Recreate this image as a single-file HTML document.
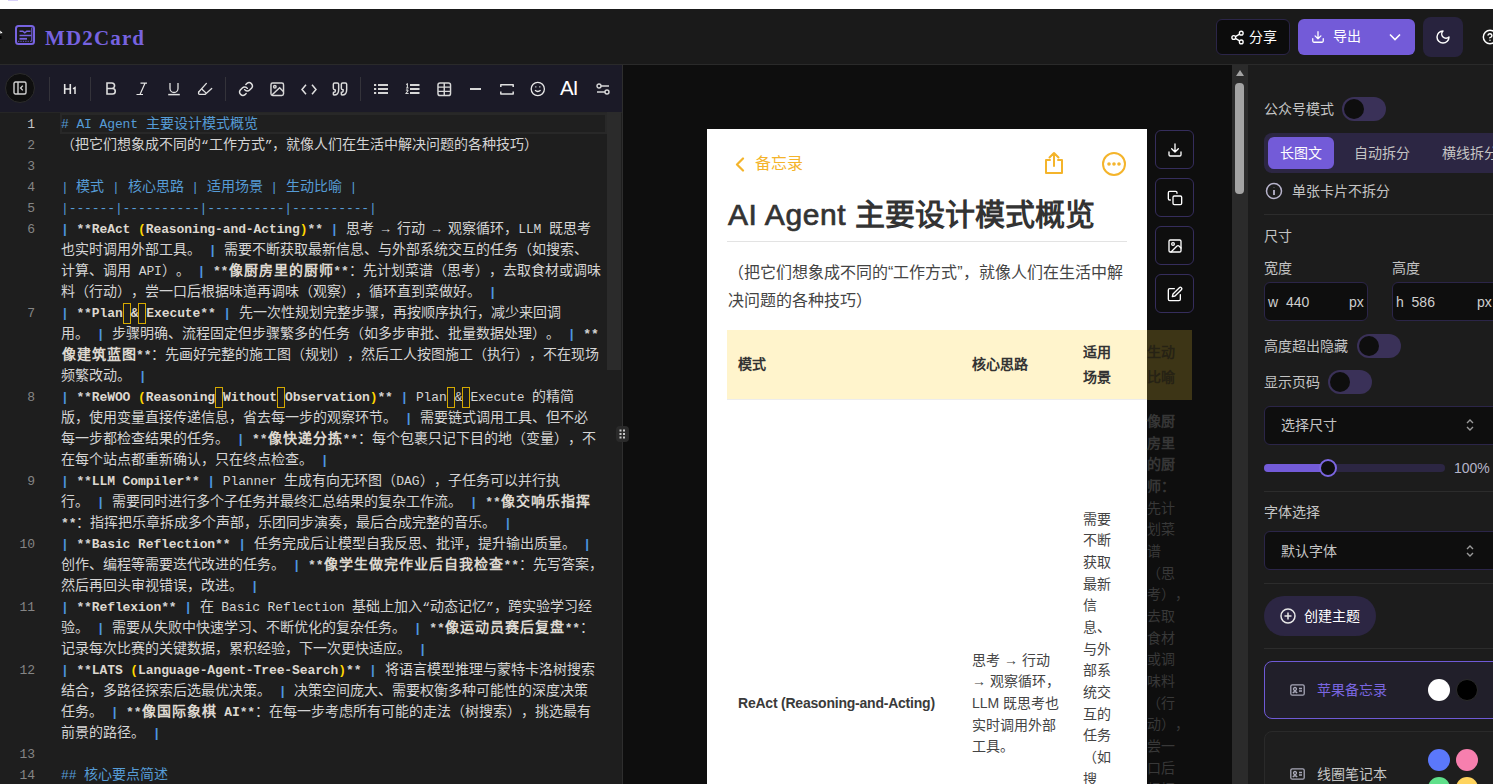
<!DOCTYPE html>
<html lang="zh-CN"><head><meta charset="utf-8">
<style>
*{box-sizing:border-box;margin:0;padding:0}
html,body{width:1493px;height:784px;overflow:hidden;background:#1a1a1a;font-family:"Liberation Sans",sans-serif}
.abs{position:absolute}
i{display:inline-block;width:1em;font-style:normal;text-align:center}
#topstrip{left:0;top:0;width:1493px;height:9px;background:#fff}
#header{left:0;top:9px;width:1493px;height:56px;background:#1a1a1a;border-bottom:1px solid #2a2a2a}
#logo-text{left:45px;top:17px;font-family:"Liberation Serif",serif;font-weight:bold;font-size:21px;color:#7763e0;line-height:24px;letter-spacing:1.15px}
.hbtn{position:absolute;border-radius:6px}
#share{left:1216px;top:10px;width:74px;height:36px;background:#0c0c0c;border:1px solid #2b2548;color:#fff;font-size:14px}
#export{left:1298px;top:10px;width:117px;height:36px;background:#735bd8;color:#fff;font-size:14px}
#moon{left:1423px;top:8px;width:40px;height:40px;background:#28233e;border-radius:8px}
/* editor */
#editor{left:0;top:65px;width:622px;height:719px;background:#1e1e1e}
#toolbar{left:0;top:0;width:622px;height:48px;background:#1b1a27;border-bottom:1px solid #262626}
.tsep{position:absolute;top:12px;width:1px;height:24px;background:#34333a}
.ti{position:absolute;top:15px;width:18px;height:18px}
#edscroll{left:607px;top:47px;width:14px;height:672px;background:#1e1e1e}
#edthumb{left:607px;top:47px;width:14px;height:258px;background:#2b2b2b}
#curline{left:60px;top:48px;width:547px;height:21px;border:2px solid #282828;background:#1f1f1f}
.ln{position:absolute;left:0;width:35px;text-align:right;font-family:"Liberation Mono",monospace;font-size:13px;line-height:21px;color:#858585}
.ln.act{color:#c6c6c6}
.el{position:absolute;left:61px;height:21px;white-space:pre;font-family:"Liberation Mono",monospace;font-size:13px;line-height:21px;color:#d4d4d4;letter-spacing:-0.1px}
.el i{width:14px;font-size:14px}
.el .o i{width:15px}
.el .b{color:#569cd6}
.el .p{font-weight:bold;color:#4d96e0}
.el .s{color:#d4d4d4;font-weight:bold}
.el .o{color:#ddd8d0;font-weight:bold}
.el .y{color:#ffd700;font-weight:bold}
.nb{display:inline-block;width:8px;height:21px;border:1px solid #d4a900;vertical-align:top;text-decoration:none}
#divider{left:622px;top:65px;width:1px;height:719px;background:#2e2e2e}
#handle{left:616px;top:426px;width:13px;height:16px;background:#2a2a2a;border-radius:4px;z-index:5}
/* preview */
#preview{left:623px;top:65px;width:609px;height:719px;background:#0e0e0e;overflow:hidden}
#card{left:84px;top:64px;width:440px;height:655px;background:#fff}
#pscroll{left:1232px;top:65px;width:16px;height:719px;background:#2b2b2b}
#pthumb{left:1235px;top:83px;width:9px;height:111px;background:#a3a3a3;border-radius:4px}
.th{font-size:14px;line-height:16px;font-weight:bold;color:#333;white-space:nowrap}
.td{font-size:14px;line-height:21.67px;color:#444;white-space:pre}
.abtn{position:absolute;left:532px;width:39px;height:39px;border:1px solid #352d5c;border-radius:6px;background:#0e0e0e}
/* settings */
#settings{left:1248px;top:65px;width:245px;height:719px;background:#1c1c1c;overflow:hidden;color:#c4c4c4;font-size:14px}
.lbl{position:absolute;left:16px;font-size:14px;line-height:16px;color:#c4c4c4;white-space:nowrap}
.tog{position:absolute;width:44px;height:24px;border-radius:12px;background:#3a3158}
.tog::after{content:"";position:absolute;left:2px;top:2px;width:20px;height:20px;border-radius:10px;background:#0e0e0e}
.inp{position:absolute;height:39px;background:#0e0e0e;border:1px solid #2b2548;border-radius:6px}
.sel{position:absolute;left:16px;width:240px;height:39px;background:#0e0e0e;border:1px solid #2b2548;border-radius:6px}
.hr{position:absolute;left:16px;width:240px;height:1px;background:#2c2c2c}
</style></head><body>
<div id="topstrip" class="abs"><div class="abs" style="left:8px;top:0;width:10px;height:1px;background:#d8d0f8"></div></div>
<div id="header" class="abs">
  <svg class="abs" style="left:15px;top:16px" width="20" height="20" viewBox="0 0 20 20" fill="none" stroke="#7763e0">
    <rect x="1" y="1" width="18" height="18" rx="2.5" stroke-width="2"/>
    <path d="M4.5 6.2h3.3l2 1.6 2-1.6h3.7" stroke-width="1.5"/>
    <path d="M4.5 10.5h12" stroke-width="1.5"/>
    <path d="M4.5 13.8h7.5" stroke-width="1.8"/>
    <path d="M3 16.3h13.5" stroke-width="0.9" stroke-dasharray="1.3 1.1"/>
    <path d="M16.8 2.5v14" stroke-width="1.1"/>
  </svg>
  <div id="logo-text" class="abs">MD2Card</div>
  <div id="share" class="hbtn">
    <svg class="abs" style="left:13px;top:10px" width="15" height="15" viewBox="0 0 24 24" fill="none" stroke="#fff" stroke-width="2.2"><circle cx="18" cy="5" r="3"/><circle cx="6" cy="12" r="3"/><circle cx="18" cy="19" r="3"/><path d="M8.6 13.5l6.8 4M15.4 6.5l-6.8 4"/></svg>
    <div class="abs" style="left:32px;top:9px;line-height:16px;white-space:nowrap"><i>分</i><i>享</i></div>
  </div>
  <div id="export" class="hbtn">
    <svg class="abs" style="left:13px;top:11px" width="14" height="14" viewBox="0 0 24 24" fill="none" stroke="#fff" stroke-width="2.2" stroke-linecap="round" stroke-linejoin="round"><path d="M3 15v4a2 2 0 0 0 2 2h14a2 2 0 0 0 2-2v-4"/><path d="M7 10l5 5 5-5M12 15V3"/></svg>
    <div class="abs" style="left:35px;top:9px;line-height:16px;white-space:nowrap"><i>导</i><i>出</i></div>
    <svg class="abs" style="left:91px;top:14px" width="12" height="8" viewBox="0 0 12 8" fill="none" stroke="#fff" stroke-width="1.6"><path d="M1 1.5l5 5 5-5"/></svg>
  </div>
  <div id="moon" class="hbtn">
    <svg class="abs" style="left:12px;top:12px" width="16" height="16" viewBox="0 0 24 24" fill="none" stroke="#fff" stroke-width="2.2" stroke-linecap="round" stroke-linejoin="round"><path d="M12 3a6 6 0 0 0 9 9 9 9 0 1 1-9-9z"/></svg>
  </div>
  <svg class="abs" style="left:1482px;top:20px" width="16" height="16" viewBox="0 0 24 24" fill="none" stroke="#fff" stroke-width="2.2" stroke-linecap="round"><circle cx="12" cy="12" r="10"/><path d="M9.1 9a3 3 0 0 1 5.8 1c0 2-3 3-3 3M12 17h.01"/></svg>
  <svg class="abs" style="left:0;top:21px" width="4" height="10" viewBox="0 0 4 10"><path d="M0 0l3 3-3 1z" fill="#fff" stroke="#000" stroke-width="0.5"/><rect x="0" y="6" width="1.5" height="3" fill="#000"/></svg>
</div>

<div id="editor" class="abs">
  <div id="toolbar" class="abs">
    <div class="abs" style="left:5px;top:8px;width:30px;height:30px;border-radius:15px;background:#0f0f0f;border:1px solid #2c2c2c"></div>
    <svg class="abs" style="left:13px;top:16px" width="14" height="14" viewBox="0 0 14 14" fill="none" stroke="#d0d0d0" stroke-width="1.4"><rect x="1" y="1" width="12" height="12" rx="1.5"/><path d="M5 1v12M9.8 4.6L7.6 7l2.2 2.4"/></svg>
    <div class="tsep" style="left:49px"></div>
    <div class="tsep" style="left:90px"></div>
    <div class="tsep" style="left:225px"></div>
    <div class="tsep" style="left:360px"></div>
    <!-- H1 -->
    <svg class="abs" style="left:63px;top:18px" width="14" height="12" viewBox="0 0 14 12" fill="none" stroke="#e6e6e6" stroke-width="1.6"><path d="M1.7 1v10M7.3 1v10M1.7 6h5.6"/><path d="M10 5.8l2-1.2V11" stroke-width="1.5"/></svg>
    <!-- B -->
    <svg class="abs" style="left:105px;top:17px" width="13" height="13" viewBox="0 0 13 13" fill="none" stroke="#dcdcdc" stroke-width="1.6"><path d="M2 1h4.8a2.75 2.75 0 0 1 0 5.5H2zM2 6.5h5.5a2.75 2.75 0 0 1 0 5.5H2z"/></svg>
    <!-- I -->
    <svg class="abs" style="left:135px;top:82px;top:17px" width="14" height="14" viewBox="0 0 14 14" fill="none" stroke="#e6e6e6" stroke-width="1.2"><path d="M5.5 1.2h6.5M1.5 12.5h6.5M10 1.2L5 12.5"/></svg>
    <!-- U -->
    <svg class="abs" style="left:167px;top:17px" width="14" height="14" viewBox="0 0 14 14" fill="none" stroke="#e0e0e0" stroke-width="1.3"><path d="M3 1v5.5a4 4 0 0 0 8 0V1"/><path d="M1.2 12.6h11.6" stroke-width="1.5"/></svg>
    <!-- eraser -->
    <svg class="abs" style="left:197px;top:17px" width="16" height="14" viewBox="0 0 16 14" fill="none" stroke="#e0e0e0" stroke-width="1.3" stroke-linecap="round" stroke-linejoin="round"><path d="M1.7 10L9.4 1.4"/><path d="M1.7 10Q1 12.4 2.8 12.4H8L14.7 6.4"/><path d="M5 7.2L8.6 10.6"/></svg>
    <!-- link -->
    <svg class="abs" style="left:237.5px;top:15.5px" width="16" height="16" viewBox="0 0 24 24" fill="none" stroke="#e0e0e0" stroke-width="2.2" stroke-linecap="round"><path d="M10 13a5 5 0 0 0 7.5.5l3-3a5 5 0 0 0-7-7l-1.7 1.7"/><path d="M14 11a5 5 0 0 0-7.5-.5l-3 3a5 5 0 0 0 7 7l1.7-1.7"/></svg>
    <!-- image -->
    <svg class="abs" style="left:270px;top:17px" width="14.5" height="14.5" viewBox="0 0 15 15" fill="none" stroke="#d8d8d8" stroke-width="1.5"><rect x="1" y="1" width="13" height="13" rx="1.8"/><circle cx="5" cy="5" r="1.3"/><path d="M2 13.5l8-7.5 4 4"/></svg>
    <!-- code -->
    <svg class="abs" style="left:301px;top:18.5px" width="16" height="11" viewBox="0 0 16 11" fill="none" stroke="#e0e0e0" stroke-width="1.5"><path d="M5 .8L1 5.5l4 4.7M11 .8l4 4.7-4 4.7"/></svg>
    <!-- quote -->
    <svg class="abs" style="left:332px;top:16px" width="16" height="16" viewBox="0 0 24 24" fill="none" stroke="#dcdcdc" stroke-width="2.2" stroke-linecap="round" stroke-linejoin="round"><path d="M3 21c3 0 7-1 7-8V5c0-1.25-.76-2-2-2H4c-1.25 0-2 .75-2 2v6c0 1.25.75 2 2 2 1 0 1 0 1 1v1c0 1-1 2-2 2s-1 0-1 1v2c0 1 0 1 1 1z"/><path d="M15 21c3 0 7-1 7-8V5c0-1.25-.76-2-2-2h-4c-1.25 0-2 .75-2 2v6c0 1.25.75 2 2 2h.75c0 2.25.25 4-2.75 4v3c0 1 0 1 1 1z"/></svg>
    <!-- ul -->
    <svg class="abs" style="left:374px;top:18px" width="15" height="12" viewBox="0 0 15 12" fill="none" stroke="#d4d4d4" stroke-width="2"><path d="M0 2h2.2M0 6h2.2M0 10h2.2"/><path d="M4 2h10M4 6h10M4 10h10" stroke-width="1.9"/></svg>
    <!-- ol -->
    <svg class="abs" style="left:405px;top:18px" width="15" height="12" viewBox="0 0 15 12" fill="none" stroke="#d8d8d8"><path d="M1.2 1.6l1.2-.6v4.2M1 5h2.6" stroke-width="1.1"/><path d="M1 7.4q.8-.8 1.6-.4.8.6-.2 1.5L1 10.5h2.6" stroke-width="1.1"/><path d="M5 2h9.5M5 6h9.5M5 10h9.5" stroke-width="1.9"/></svg>
    <!-- table -->
    <svg class="abs" style="left:437px;top:17px" width="14.5" height="14.5" viewBox="0 0 15 15" fill="none" stroke="#d8d8d8" stroke-width="1.5"><rect x="1" y="1" width="13" height="13" rx="2.2"/><path d="M1 5.3h13M1 9.7h13M7.5 1v13"/></svg>
    <!-- hr -->
    <svg class="abs" style="left:469.5px;top:23px" width="12" height="3" viewBox="0 0 12 3"><rect x="0" y="0" width="11" height="2" fill="#d8d8d8"/></svg>
    <!-- page break -->
    <svg class="abs" style="left:500px;top:19px" width="14" height="11" viewBox="0 0 14 11" fill="none" stroke="#e0e0e0" stroke-width="1.5" stroke-linejoin="round"><path d="M.8 3V.8h12.4V3M.8 7.6v2.4h12.4V7.6"/></svg>
    <!-- emoji -->
    <svg class="abs" style="left:530px;top:16px" width="16" height="16" viewBox="0 0 16 16" fill="none" stroke="#e8e8e8" stroke-width="1.3"><circle cx="7.8" cy="8" r="6.6"/><path d="M5 9.3q2.8 2.4 5.6 0"/><path d="M5.2 5.2h1.2v1.2H5.2zM9.2 5.2h1.2v1.2H9.2z" fill="#d0d0d0" stroke="none"/></svg>
    <!-- AI -->
    <div class="abs" style="left:560px;top:12px;font-size:20.5px;line-height:22px;color:#fff;letter-spacing:-0.8px">AI</div>
    <!-- settings -->
    <svg class="abs" style="left:596px;top:18px" width="14" height="12" viewBox="0 0 14 12" fill="none" stroke="#d8d8d8" stroke-width="1.4"><circle cx="3" cy="3" r="2"/><circle cx="11" cy="9" r="2"/><path d="M5 3h8M1 9h8"/></svg>
  </div>
  <div id="edscroll" class="abs"></div>
  <div id="edthumb" class="abs"></div>
  <div id="curline" class="abs"></div>
  <div class="abs" style="left:0;top:-64px">
<div class="ln act" style="top:113px">1</div>
<div class="el" style="top:113px"><span class="b"># AI Agent <i>主</i><i>要</i><i>设</i><i>计</i><i>模</i><i>式</i><i>概</i><i>览</i></span></div>
<div class="ln" style="top:134px">2</div>
<div class="el" style="top:134px"><span class="d"><i>（</i><i>把</i><i>它</i><i>们</i><i>想</i><i>象</i><i>成</i><i>不</i><i>同</i><i>的</i>“<i>工</i><i>作</i><i>方</i><i>式</i>”<i>，</i><i>就</i><i>像</i><i>人</i><i>们</i><i>在</i><i>生</i><i>活</i><i>中</i><i>解</i><i>决</i><i>问</i><i>题</i><i>的</i><i>各</i><i>种</i><i>技</i><i>巧</i><i>）</i></span></div>
<div class="ln" style="top:155px">3</div>
<div class="el" style="top:155px"></div>
<div class="ln" style="top:176px">4</div>
<div class="el" style="top:176px"><span class="b">| <i>模</i><i>式</i> | <i>核</i><i>心</i><i>思</i><i>路</i> | <i>适</i><i>用</i><i>场</i><i>景</i> | <i>生</i><i>动</i><i>比</i><i>喻</i> |</span></div>
<div class="ln" style="top:197px">5</div>
<div class="el" style="top:197px"><span class="b">|------|----------|----------|----------|</span></div>
<div class="ln" style="top:218px">6</div>
<div class="el" style="top:218px"><span class="b p">| </span><span class="s">**</span><span class="o">ReAct </span><span class="y">(</span><span class="o">Reasoning-and-Acting</span><span class="y">)</span><span class="s">**</span><span class="d"> </span><span class="b p">|</span><span class="d"> <i>思</i><i>考</i> → <i>行</i><i>动</i> → <i>观</i><i>察</i><i>循</i><i>环</i><i>，</i>LLM <i>既</i><i>思</i><i>考</i></span></div>
<div class="el" style="top:239px"><span class="d"><i>也</i><i>实</i><i>时</i><i>调</i><i>用</i><i>外</i><i>部</i><i>工</i><i>具</i><i>。</i> </span><span class="b p">|</span><span class="d"> <i>需</i><i>要</i><i>不</i><i>断</i><i>获</i><i>取</i><i>最</i><i>新</i><i>信</i><i>息</i><i>、</i><i>与</i><i>外</i><i>部</i><i>系</i><i>统</i><i>交</i><i>互</i><i>的</i><i>任</i><i>务</i><i>（</i><i>如</i><i>搜</i><i>索</i><i>、</i></span></div>
<div class="el" style="top:260px"><span class="d"><i>计</i><i>算</i><i>、</i><i>调</i><i>用</i> API<i>）</i><i>。</i> </span><span class="b p">|</span><span class="d"> </span><span class="s">**</span><span class="o"><i>像</i><i>厨</i><i>房</i><i>里</i><i>的</i><i>厨</i><i>师</i></span><span class="s">**</span><span class="d"><i>：</i><i>先</i><i>计</i><i>划</i><i>菜</i><i>谱</i><i>（</i><i>思</i><i>考</i><i>）</i><i>，</i><i>去</i><i>取</i><i>食</i><i>材</i><i>或</i><i>调</i><i>味</i></span></div>
<div class="el" style="top:281px"><span class="d"><i>料</i><i>（</i><i>行</i><i>动</i><i>）</i><i>，</i><i>尝</i><i>一</i><i>口</i><i>后</i><i>根</i><i>据</i><i>味</i><i>道</i><i>再</i><i>调</i><i>味</i><i>（</i><i>观</i><i>察</i><i>）</i><i>，</i><i>循</i><i>环</i><i>直</i><i>到</i><i>菜</i><i>做</i><i>好</i><i>。</i> </span><span class="b p">|</span></div>
<div class="ln" style="top:302px">7</div>
<div class="el" style="top:302px"><span class="b p">| </span><span class="s">**</span><span class="o">Plan</span><u class="nb"></u><span class="o">&amp;</span><u class="nb"></u><span class="o">Execute</span><span class="s">**</span><span class="d"> </span><span class="b p">|</span><span class="d"> <i>先</i><i>一</i><i>次</i><i>性</i><i>规</i><i>划</i><i>完</i><i>整</i><i>步</i><i>骤</i><i>，</i><i>再</i><i>按</i><i>顺</i><i>序</i><i>执</i><i>行</i><i>，</i><i>减</i><i>少</i><i>来</i><i>回</i><i>调</i></span></div>
<div class="el" style="top:323px"><span class="d"><i>用</i><i>。</i> </span><span class="b p">|</span><span class="d"> <i>步</i><i>骤</i><i>明</i><i>确</i><i>、</i><i>流</i><i>程</i><i>固</i><i>定</i><i>但</i><i>步</i><i>骤</i><i>繁</i><i>多</i><i>的</i><i>任</i><i>务</i><i>（</i><i>如</i><i>多</i><i>步</i><i>审</i><i>批</i><i>、</i><i>批</i><i>量</i><i>数</i><i>据</i><i>处</i><i>理</i><i>）</i><i>。</i> </span><span class="b p">|</span><span class="d"> </span><span class="s">**</span></div>
<div class="el" style="top:344px"><span class="o"><i>像</i><i>建</i><i>筑</i><i>蓝</i><i>图</i></span><span class="s">**</span><span class="d"><i>：</i><i>先</i><i>画</i><i>好</i><i>完</i><i>整</i><i>的</i><i>施</i><i>工</i><i>图</i><i>（</i><i>规</i><i>划</i><i>）</i><i>，</i><i>然</i><i>后</i><i>工</i><i>人</i><i>按</i><i>图</i><i>施</i><i>工</i><i>（</i><i>执</i><i>行</i><i>）</i><i>，</i><i>不</i><i>在</i><i>现</i><i>场</i></span></div>
<div class="el" style="top:365px"><span class="d"><i>频</i><i>繁</i><i>改</i><i>动</i><i>。</i> </span><span class="b p">|</span></div>
<div class="ln" style="top:386px">8</div>
<div class="el" style="top:386px"><span class="b p">| </span><span class="s">**</span><span class="o">ReWOO </span><span class="y">(</span><span class="o">Reasoning</span><u class="nb"></u><span class="o">Without</span><u class="nb"></u><span class="o">Observation</span><span class="y">)</span><span class="s">**</span><span class="d"> </span><span class="b p">|</span><span class="d"> Plan</span><u class="nb"></u><span class="d">&amp;</span><u class="nb"></u><span class="d">Execute <i>的</i><i>精</i><i>简</i></span></div>
<div class="el" style="top:407px"><span class="d"><i>版</i><i>，</i><i>使</i><i>用</i><i>变</i><i>量</i><i>直</i><i>接</i><i>传</i><i>递</i><i>信</i><i>息</i><i>，</i><i>省</i><i>去</i><i>每</i><i>一</i><i>步</i><i>的</i><i>观</i><i>察</i><i>环</i><i>节</i><i>。</i> </span><span class="b p">|</span><span class="d"> <i>需</i><i>要</i><i>链</i><i>式</i><i>调</i><i>用</i><i>工</i><i>具</i><i>、</i><i>但</i><i>不</i><i>必</i></span></div>
<div class="el" style="top:428px"><span class="d"><i>每</i><i>一</i><i>步</i><i>都</i><i>检</i><i>查</i><i>结</i><i>果</i><i>的</i><i>任</i><i>务</i><i>。</i> </span><span class="b p">|</span><span class="d"> </span><span class="s">**</span><span class="o"><i>像</i><i>快</i><i>递</i><i>分</i><i>拣</i></span><span class="s">**</span><span class="d"><i>：</i><i>每</i><i>个</i><i>包</i><i>裹</i><i>只</i><i>记</i><i>下</i><i>目</i><i>的</i><i>地</i><i>（</i><i>变</i><i>量</i><i>）</i><i>，</i><i>不</i></span></div>
<div class="el" style="top:449px"><span class="d"><i>在</i><i>每</i><i>个</i><i>站</i><i>点</i><i>都</i><i>重</i><i>新</i><i>确</i><i>认</i><i>，</i><i>只</i><i>在</i><i>终</i><i>点</i><i>检</i><i>查</i><i>。</i> </span><span class="b p">|</span></div>
<div class="ln" style="top:470px">9</div>
<div class="el" style="top:470px"><span class="b p">| </span><span class="s">**</span><span class="o">LLM Compiler</span><span class="s">**</span><span class="d"> </span><span class="b p">|</span><span class="d"> Planner <i>生</i><i>成</i><i>有</i><i>向</i><i>无</i><i>环</i><i>图</i><i>（</i>DAG<i>）</i><i>，</i><i>子</i><i>任</i><i>务</i><i>可</i><i>以</i><i>并</i><i>行</i><i>执</i></span></div>
<div class="el" style="top:491px"><span class="d"><i>行</i><i>。</i> </span><span class="b p">|</span><span class="d"> <i>需</i><i>要</i><i>同</i><i>时</i><i>进</i><i>行</i><i>多</i><i>个</i><i>子</i><i>任</i><i>务</i><i>并</i><i>最</i><i>终</i><i>汇</i><i>总</i><i>结</i><i>果</i><i>的</i><i>复</i><i>杂</i><i>工</i><i>作</i><i>流</i><i>。</i> </span><span class="b p">|</span><span class="d"> </span><span class="s">**</span><span class="o"><i>像</i><i>交</i><i>响</i><i>乐</i><i>指</i><i>挥</i></span></div>
<div class="el" style="top:512px"><span class="s">**</span><span class="d"><i>：</i><i>指</i><i>挥</i><i>把</i><i>乐</i><i>章</i><i>拆</i><i>成</i><i>多</i><i>个</i><i>声</i><i>部</i><i>，</i><i>乐</i><i>团</i><i>同</i><i>步</i><i>演</i><i>奏</i><i>，</i><i>最</i><i>后</i><i>合</i><i>成</i><i>完</i><i>整</i><i>的</i><i>音</i><i>乐</i><i>。</i> </span><span class="b p">|</span></div>
<div class="ln" style="top:533px">10</div>
<div class="el" style="top:533px"><span class="b p">| </span><span class="s">**</span><span class="o">Basic Reflection</span><span class="s">**</span><span class="d"> </span><span class="b p">|</span><span class="d"> <i>任</i><i>务</i><i>完</i><i>成</i><i>后</i><i>让</i><i>模</i><i>型</i><i>自</i><i>我</i><i>反</i><i>思</i><i>、</i><i>批</i><i>评</i><i>，</i><i>提</i><i>升</i><i>输</i><i>出</i><i>质</i><i>量</i><i>。</i> </span><span class="b p">|</span></div>
<div class="el" style="top:554px"><span class="d"><i>创</i><i>作</i><i>、</i><i>编</i><i>程</i><i>等</i><i>需</i><i>要</i><i>迭</i><i>代</i><i>改</i><i>进</i><i>的</i><i>任</i><i>务</i><i>。</i> </span><span class="b p">|</span><span class="d"> </span><span class="s">**</span><span class="o"><i>像</i><i>学</i><i>生</i><i>做</i><i>完</i><i>作</i><i>业</i><i>后</i><i>自</i><i>我</i><i>检</i><i>查</i></span><span class="s">**</span><span class="d"><i>：</i><i>先</i><i>写</i><i>答</i><i>案</i><i>，</i></span></div>
<div class="el" style="top:575px"><span class="d"><i>然</i><i>后</i><i>再</i><i>回</i><i>头</i><i>审</i><i>视</i><i>错</i><i>误</i><i>，</i><i>改</i><i>进</i><i>。</i> </span><span class="b p">|</span></div>
<div class="ln" style="top:596px">11</div>
<div class="el" style="top:596px"><span class="b p">| </span><span class="s">**</span><span class="o">Reflexion</span><span class="s">**</span><span class="d"> </span><span class="b p">|</span><span class="d"> <i>在</i> Basic Reflection <i>基</i><i>础</i><i>上</i><i>加</i><i>入</i>“<i>动</i><i>态</i><i>记</i><i>忆</i>”<i>，</i><i>跨</i><i>实</i><i>验</i><i>学</i><i>习</i><i>经</i></span></div>
<div class="el" style="top:617px"><span class="d"><i>验</i><i>。</i> </span><span class="b p">|</span><span class="d"> <i>需</i><i>要</i><i>从</i><i>失</i><i>败</i><i>中</i><i>快</i><i>速</i><i>学</i><i>习</i><i>、</i><i>不</i><i>断</i><i>优</i><i>化</i><i>的</i><i>复</i><i>杂</i><i>任</i><i>务</i><i>。</i> </span><span class="b p">|</span><span class="d"> </span><span class="s">**</span><span class="o"><i>像</i><i>运</i><i>动</i><i>员</i><i>赛</i><i>后</i><i>复</i><i>盘</i></span><span class="s">**</span><span class="d"><i>：</i></span></div>
<div class="el" style="top:638px"><span class="d"><i>记</i><i>录</i><i>每</i><i>次</i><i>比</i><i>赛</i><i>的</i><i>关</i><i>键</i><i>数</i><i>据</i><i>，</i><i>累</i><i>积</i><i>经</i><i>验</i><i>，</i><i>下</i><i>一</i><i>次</i><i>更</i><i>快</i><i>适</i><i>应</i><i>。</i> </span><span class="b p">|</span></div>
<div class="ln" style="top:659px">12</div>
<div class="el" style="top:659px"><span class="b p">| </span><span class="s">**</span><span class="o">LATS </span><span class="y">(</span><span class="o">Language-Agent-Tree-Search</span><span class="y">)</span><span class="s">**</span><span class="d"> </span><span class="b p">|</span><span class="d"> <i>将</i><i>语</i><i>言</i><i>模</i><i>型</i><i>推</i><i>理</i><i>与</i><i>蒙</i><i>特</i><i>卡</i><i>洛</i><i>树</i><i>搜</i><i>索</i></span></div>
<div class="el" style="top:680px"><span class="d"><i>结</i><i>合</i><i>，</i><i>多</i><i>路</i><i>径</i><i>探</i><i>索</i><i>后</i><i>选</i><i>最</i><i>优</i><i>决</i><i>策</i><i>。</i> </span><span class="b p">|</span><span class="d"> <i>决</i><i>策</i><i>空</i><i>间</i><i>庞</i><i>大</i><i>、</i><i>需</i><i>要</i><i>权</i><i>衡</i><i>多</i><i>种</i><i>可</i><i>能</i><i>性</i><i>的</i><i>深</i><i>度</i><i>决</i><i>策</i></span></div>
<div class="el" style="top:701px"><span class="d"><i>任</i><i>务</i><i>。</i> </span><span class="b p">|</span><span class="d"> </span><span class="s">**</span><span class="o"><i>像</i><i>国</i><i>际</i><i>象</i><i>棋</i> AI</span><span class="s">**</span><span class="d"><i>：</i><i>在</i><i>每</i><i>一</i><i>步</i><i>考</i><i>虑</i><i>所</i><i>有</i><i>可</i><i>能</i><i>的</i><i>走</i><i>法</i><i>（</i><i>树</i><i>搜</i><i>索</i><i>）</i><i>，</i><i>挑</i><i>选</i><i>最</i><i>有</i></span></div>
<div class="el" style="top:722px"><span class="d"><i>前</i><i>景</i><i>的</i><i>路</i><i>径</i><i>。</i> </span><span class="b p">|</span></div>
<div class="ln" style="top:743px">13</div>
<div class="el" style="top:743px"></div>
<div class="ln" style="top:764px">14</div>
<div class="el" style="top:764px"><span class="b">## <i>核</i><i>心</i><i>要</i><i>点</i><i>简</i><i>述</i></span></div>
  </div>
</div>
<div id="divider" class="abs"></div>
<div id="handle" class="abs"><svg class="abs" style="left:3px;top:3px" width="7" height="10" viewBox="0 0 7 10" fill="#c8c8c8"><rect x="0.5" y="0.5" width="2" height="2"/><rect x="4" y="0.5" width="2" height="2"/><rect x="0.5" y="4" width="2" height="2"/><rect x="4" y="4" width="2" height="2"/><rect x="0.5" y="7.5" width="2" height="2"/><rect x="4" y="7.5" width="2" height="2"/></svg></div>


<div id="preview" class="abs">
  <div id="card" class="abs"></div>
  <!-- overflow dim region (page x 1147-1232) -->
  <div class="abs" style="left:524px;top:265px;width:45px;height:70px;background:#3d3516"></div>
  <div class="abs" style="left:524px;top:275px;width:40px;font-size:14px;line-height:25px;font-weight:bold;color:#262214"><i>生</i><i>动</i><br><i>比</i><i>喻</i></div>
  <div class="abs cdim" style="left:524px;top:346px;width:40px;font-size:14px;line-height:21.67px;color:#383838;white-space:pre"><b style="color:#363636"><i>像</i><i>厨</i>
<i>房</i><i>里</i>
<i>的</i><i>厨</i>
<i>师</i><i>：</i></b>
<i>先</i><i>计</i>
<i>划</i><i>菜</i>
<i>谱</i>
<i>（</i><i>思</i>
<i>考</i><i>）</i><i>，</i>
<i>去</i><i>取</i>
<i>食</i><i>材</i>
<i>或</i><i>调</i>
<i>味</i><i>料</i>
<i>（</i><i>行</i>
<i>动</i><i>）</i><i>，</i>
<i>尝</i><i>一</i>
<i>口</i><i>后</i>
<i>根</i><i>据</i></div>
  <div class="abs" style="left:84px;top:64px;width:440px;height:655px;overflow:hidden">
    <svg class="abs" style="left:28px;top:28px" width="10" height="15" viewBox="0 0 10 15" fill="none" stroke="#f4b42b" stroke-width="2.2" stroke-linecap="round" stroke-linejoin="round"><path d="M8 1.5L2 7.5l6 6"/></svg>
    <div class="abs" style="left:48px;top:26px;font-size:16px;line-height:18px;color:#f4b42b;white-space:nowrap"><i>备</i><i>忘</i><i>录</i></div>
    <svg class="abs" style="left:336px;top:22px" width="22" height="24" viewBox="0 0 22 24" fill="none" stroke="#f4b42b" stroke-width="2" stroke-linecap="round" stroke-linejoin="round"><path d="M7 9H3v13h16V9h-4M11 15V2M6.5 6.5L11 2l4.5 4.5"/></svg>
    <svg class="abs" style="left:395px;top:23px" width="24" height="24" viewBox="0 0 24 24" fill="none" stroke="#f4b42b" stroke-width="2"><circle cx="12" cy="12" r="11"/><circle cx="7" cy="12" r=".8" fill="#f4b42b"/><circle cx="12" cy="12" r=".8" fill="#f4b42b"/><circle cx="17" cy="12" r=".8" fill="#f4b42b"/></svg>
    <div class="abs" style="left:21px;top:69px;font-size:30px;line-height:34px;font-weight:bold;color:#333;white-space:nowrap"><span style="font-weight:normal;-webkit-text-stroke:0.7px #333;letter-spacing:0.6px">AI Agent </span><span style="letter-spacing:-0.4px"><i>主</i><i>要</i><i>设</i><i>计</i><i>模</i><i>式</i><i>概</i><i>览</i></span></div>
    <div class="abs" style="left:20px;top:112px;width:400px;height:1px;background:#e3e3e3"></div>
    <div class="abs" style="left:21px;top:130px;width:410px;font-size:16px;line-height:28px;color:#444;white-space:pre"><i>（</i><i>把</i><i>它</i><i>们</i><i>想</i><i>象</i><i>成</i><i>不</i><i>同</i><i>的</i>“<i>工</i><i>作</i><i>方</i><i>式</i>”<i>，</i><i>就</i><i>像</i><i>人</i><i>们</i><i>在</i><i>生</i><i>活</i><i>中</i><i>解</i>
<i>决</i><i>问</i><i>题</i><i>的</i><i>各</i><i>种</i><i>技</i><i>巧</i><i>）</i></div>
    <div class="abs" style="left:20px;top:201px;width:440px;height:70px;background:#fff4cc;border-bottom:1px solid #ececec"></div>
    <div class="abs th" style="left:31px;top:227px"><i>模</i><i>式</i></div>
    <div class="abs th" style="left:265px;top:227px"><i>核</i><i>心</i><i>思</i><i>路</i></div>
    <div class="abs th" style="left:376px;top:211px;line-height:25px"><i>适</i><i>用</i><br><i>场</i><i>景</i></div>
    <div class="abs" style="left:31px;top:566px;font-size:14px;line-height:16px;font-weight:bold;color:#3a3a3a;white-space:nowrap;letter-spacing:-0.22px">ReAct (Reasoning-and-Acting)</div>
    <div class="abs td" style="left:265px;top:520.5px"><i>思</i><i>考</i> → <i>行</i><i>动</i>
→ <i>观</i><i>察</i><i>循</i><i>环</i><i>，</i>
LLM <i>既</i><i>思</i><i>考</i><i>也</i>
<i>实</i><i>时</i><i>调</i><i>用</i><i>外</i><i>部</i>
<i>工</i><i>具</i><i>。</i></div>
    <div class="abs td" style="left:376px;top:379.5px"><i>需</i><i>要</i>
<i>不</i><i>断</i>
<i>获</i><i>取</i>
<i>最</i><i>新</i>
<i>信</i>
<i>息</i><i>、</i>
<i>与</i><i>外</i>
<i>部</i><i>系</i>
<i>统</i><i>交</i>
<i>互</i><i>的</i>
<i>任</i><i>务</i>
<i>（</i><i>如</i>
<i>搜</i>
<i>索</i><i>、</i></div>
  </div>
  <div class="abtn" style="top:65px"><svg class="abs" style="left:11px;top:11px" width="16" height="16" viewBox="0 0 24 24" fill="none" stroke="#fff" stroke-width="2" stroke-linecap="round" stroke-linejoin="round"><path d="M3 15v4a2 2 0 0 0 2 2h14a2 2 0 0 0 2-2v-4"/><path d="M7 10l5 5 5-5M12 15V3"/></svg></div>
  <div class="abtn" style="top:113px"><svg class="abs" style="left:11px;top:11px" width="16" height="16" viewBox="0 0 24 24" fill="none" stroke="#fff" stroke-width="2" stroke-linecap="round" stroke-linejoin="round"><rect x="9" y="9" width="13" height="13" rx="2"/><path d="M5 15H4a2 2 0 0 1-2-2V4a2 2 0 0 1 2-2h9a2 2 0 0 1 2 2v1"/></svg></div>
  <div class="abtn" style="top:161px"><svg class="abs" style="left:11px;top:11px" width="16" height="16" viewBox="0 0 24 24" fill="none" stroke="#fff" stroke-width="2" stroke-linecap="round" stroke-linejoin="round"><rect x="3" y="3" width="18" height="18" rx="2"/><circle cx="9" cy="9" r="2"/><path d="M21 15l-3-3a2 2 0 0 0-3 0L6 21"/></svg></div>
  <div class="abtn" style="top:209px"><svg class="abs" style="left:11px;top:11px" width="16" height="16" viewBox="0 0 24 24" fill="none" stroke="#fff" stroke-width="2" stroke-linecap="round" stroke-linejoin="round"><path d="M11 4H4a2 2 0 0 0-2 2v14a2 2 0 0 0 2 2h14a2 2 0 0 0 2-2v-7"/><path d="M18.5 2.5a2.1 2.1 0 0 1 3 3L12 15l-4 1 1-4z"/></svg></div>
</div>
<div id="pscroll" class="abs">
  <svg class="abs" style="left:4px;top:5px" width="8" height="6" viewBox="0 0 8 6"><path d="M0 6L4 0l4 6z" fill="#a3a3a3"/></svg>
</div>
<div id="pthumb" class="abs"></div>


<div id="settings" class="abs">
  <div class="lbl" style="top:36px"><i>公</i><i>众</i><i>号</i><i>模</i><i>式</i></div>
  <div class="tog" style="left:94px;top:32px"></div>
  <div class="abs" style="left:16px;top:68px;width:260px;height:40px;background:#2c2643;border-radius:8px"></div>
  <div class="abs" style="left:20px;top:72px;width:66px;height:32px;background:#735bd8;border-radius:6px"></div>
  <div class="lbl" style="left:32px;top:80px;color:#fff"><i>长</i><i>图</i><i>文</i></div>
  <div class="lbl" style="left:106px;top:80px"><i>自</i><i>动</i><i>拆</i><i>分</i></div>
  <div class="lbl" style="left:194px;top:80px"><i>横</i><i>线</i><i>拆</i><i>分</i></div>
  <svg class="abs" style="left:17px;top:117px" width="18" height="18" viewBox="0 0 18 18" fill="none" stroke="#b8b4cc" stroke-width="1.5"><circle cx="9" cy="9" r="7.5"/><path d="M9 8v5M9 5.2v.3" stroke-width="1.8"/></svg>
  <div class="lbl" style="left:44px;top:118px"><i>单</i><i>张</i><i>卡</i><i>片</i><i>不</i><i>拆</i><i>分</i></div>
  <div class="hr" style="top:149px"></div>
  <div class="lbl" style="top:163px"><i>尺</i><i>寸</i></div>
  <div class="lbl" style="top:195px"><i>宽</i><i>度</i></div>
  <div class="lbl" style="left:144px;top:195px"><i>高</i><i>度</i></div>
  <div class="inp" style="left:16px;top:217px;width:104px"></div>
  <div class="lbl" style="left:20px;top:229px;color:#cfcfcf">w&nbsp;&nbsp;440</div>
  <div class="lbl" style="left:101px;top:229px;color:#cfcfcf">px</div>
  <div class="inp" style="left:144px;top:217px;width:120px"></div>
  <div class="lbl" style="left:148px;top:229px;color:#cfcfcf">h&nbsp;&nbsp;586</div>
  <div class="lbl" style="left:229px;top:229px;color:#cfcfcf">px</div>
  <div class="lbl" style="top:273px"><i>高</i><i>度</i><i>超</i><i>出</i><i>隐</i><i>藏</i></div>
  <div class="tog" style="left:109px;top:269px"></div>
  <div class="lbl" style="top:309px"><i>显</i><i>示</i><i>页</i><i>码</i></div>
  <div class="tog" style="left:80px;top:305px"></div>
  <div class="sel" style="top:341px"></div>
  <div class="lbl" style="left:33px;top:352px"><i>选</i><i>择</i><i>尺</i><i>寸</i></div>
  <svg class="abs" style="left:217px;top:353px" width="10" height="14" viewBox="0 0 10 14" fill="none" stroke="#9a9a9a" stroke-width="1.4"><path d="M2 5l3-3 3 3M2 9l3 3 3-3"/></svg>
  <div class="abs" style="left:16px;top:399px;width:181px;height:8px;border-radius:4px;background:#2c2643"></div>
  <div class="abs" style="left:16px;top:399px;width:66px;height:8px;border-radius:4px;background:#735bd8"></div>
  <div class="abs" style="left:71px;top:394px;width:18px;height:18px;border-radius:9px;background:#0e0e0e;border:2px solid #7b66e0"></div>
  <div class="lbl" style="left:206px;top:395px;color:#b4b4c8">100%</div>
  <div class="hr" style="top:426px"></div>
  <div class="lbl" style="top:439px"><i>字</i><i>体</i><i>选</i><i>择</i></div>
  <div class="sel" style="top:466px"></div>
  <div class="lbl" style="left:33px;top:478px"><i>默</i><i>认</i><i>字</i><i>体</i></div>
  <svg class="abs" style="left:217px;top:479px" width="10" height="14" viewBox="0 0 10 14" fill="none" stroke="#9a9a9a" stroke-width="1.4"><path d="M2 5l3-3 3 3M2 9l3 3 3-3"/></svg>
  <div class="hr" style="top:518px"></div>
  <div class="abs" style="left:16px;top:531px;width:112px;height:40px;border-radius:20px;background:#2c2643"></div>
  <svg class="abs" style="left:32px;top:543px" width="16" height="16" viewBox="0 0 16 16" fill="none" stroke="#e8e8e8" stroke-width="1.5"><circle cx="8" cy="8" r="7"/><path d="M8 4.5v7M4.5 8h7"/></svg>
  <div class="lbl" style="left:56px;top:543px;color:#fff"><i>创</i><i>建</i><i>主</i><i>题</i></div>
  <div class="hr" style="top:583px"></div>
  <div class="abs" style="left:16px;top:596px;width:260px;height:58px;border-radius:8px;background:#211f2a;border:1.5px solid #6f5ad6"></div>
  <svg class="abs" style="left:42px;top:619px" width="15" height="12" viewBox="0 0 15 12" fill="none" stroke="#a8a8b8" stroke-width="1.3"><rect x=".8" y=".8" width="13.4" height="10.4" rx="1.5"/><circle cx="5" cy="5" r="1.5"/><path d="M2.8 9q2.2-2.5 4.4 0M9 4.5h3M9 7h3"/></svg>
  <div class="lbl" style="left:69px;top:617px;color:#7a66e0"><i>苹</i><i>果</i><i>备</i><i>忘</i><i>录</i></div>
  <div class="abs" style="left:180px;top:614px;width:22px;height:22px;border-radius:11px;background:#fff"></div>
  <div class="abs" style="left:208px;top:614px;width:22px;height:22px;border-radius:11px;background:#000;border:1px solid #2a2a2a"></div>
  <div class="abs" style="left:16px;top:666px;width:260px;height:90px;border-radius:8px;background:#1e1e1e;border:1px solid #2a2a2a"></div>
  <svg class="abs" style="left:42px;top:703px" width="15" height="12" viewBox="0 0 15 12" fill="none" stroke="#a8a8b8" stroke-width="1.3"><rect x=".8" y=".8" width="13.4" height="10.4" rx="1.5"/><circle cx="5" cy="5" r="1.5"/><path d="M2.8 9q2.2-2.5 4.4 0M9 4.5h3M9 7h3"/></svg>
  <div class="lbl" style="left:69px;top:701px"><i>线</i><i>圈</i><i>笔</i><i>记</i><i>本</i></div>
  <div class="abs" style="left:180px;top:684px;width:22px;height:22px;border-radius:11px;background:#5b78fb"></div>
  <div class="abs" style="left:208px;top:684px;width:22px;height:22px;border-radius:11px;background:#f77fae"></div>
  <div class="abs" style="left:180px;top:712px;width:22px;height:22px;border-radius:11px;background:#5fe08a"></div>
  <div class="abs" style="left:208px;top:712px;width:22px;height:22px;border-radius:11px;background:#ffd45e"></div>
</div>
</body></html>
